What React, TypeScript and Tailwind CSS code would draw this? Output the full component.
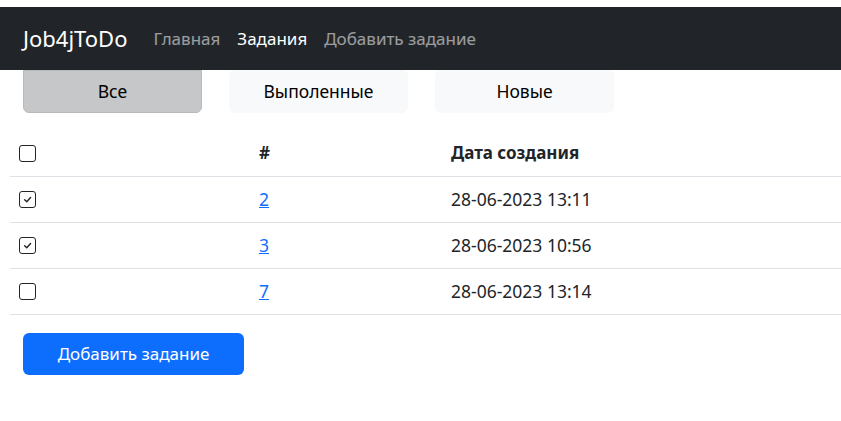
import { useState } from "react";

type Task = { id: number; created: string; done: boolean };

const tasks: Task[] = [
  { id: 2, created: "28-06-2023 13:11", done: true },
  { id: 3, created: "28-06-2023 10:56", done: true },
  { id: 7, created: "28-06-2023 13:14", done: false },
];

function Check({ checked }: { checked: boolean }) {
  return (
    <span className="w-[17px] h-[17px] rounded-[3px] border border-[#212529] bg-white flex items-center justify-center">
      {checked && (
        <svg width="11" height="11" viewBox="0 0 10 10" fill="none">
          <path d="M2.4 5.3 L4.3 7 L7.8 3.2" stroke="#212529" strokeWidth="1.3" strokeLinecap="round" strokeLinejoin="round" />
        </svg>
      )}
    </span>
  );
}

export default function App() {
  const [filter, setFilter] = useState("all");

  const tabs = [
    { key: "all", label: "Все" },
    { key: "done", label: "Выполенные" },
    { key: "new", label: "Новые" },
  ];

  return (
    <div className="w-[841px] h-[421px] bg-white text-[#212529] font-['Noto_Sans',sans-serif] text-[17.5px] overflow-hidden">
      {/* Navbar */}
      <div className="mt-[7px] h-[63px] bg-[#212529] flex items-center px-[23px]">
        <span className="text-white text-[22px] mr-[26px]">Job4jToDo</span>
        <nav className="flex gap-[17px] text-[17px]">
          <span className="text-white/55">Главная</span>
          <span className="text-white">Задания</span>
          <span className="text-white/55">Добавить задание</span>
        </nav>
      </div>

      {/* Filter buttons */}
      <div className="flex gap-[27px] px-[23px]">
        {tabs.map((t) => (
          <button
            key={t.key}
            onClick={() => setFilter(t.key)}
            className={
              filter === t.key
                ? "w-[179px] h-[43px] rounded-b-md rounded-t-none border border-[#b8b9ba] bg-[#c6c7c8] text-[#000]"
                : "w-[179px] h-[43px] rounded-md border border-[#f8f9fa] bg-[#f8f9fa] text-[#000]"
            }
          >
            {t.label}
          </button>
        ))}
      </div>

      {/* Table */}
      <div className="mt-[17px] ml-[10px]">
        <div className="grid grid-cols-[241px_192px_1fr] h-[47px] items-center border-b border-[#dee2e6] font-bold text-[17px]">
          <div className="pl-[9px]"><Check checked={false} /></div>
          <div className="pl-2">#</div>
          <div className="pl-2">Дата создания</div>
        </div>
        {tasks.map((task) => (
          <div key={task.id} className="grid grid-cols-[241px_192px_1fr] h-[46px] items-center border-b border-[#dee2e6]">
            <div className="pl-[9px]"><Check checked={task.done} /></div>
            <div className="pl-2">
              <a href="#" className="text-[#0d6efd] underline">{task.id}</a>
            </div>
            <div className="pl-2">{task.created}</div>
          </div>
        ))}
      </div>

      <div className="px-[23px] mt-[18px]">
        <button className="w-[221px] h-[42px] rounded-md bg-[#0d6efd] text-white text-[17px]">
          Добавить задание
        </button>
      </div>
    </div>
  );
}
